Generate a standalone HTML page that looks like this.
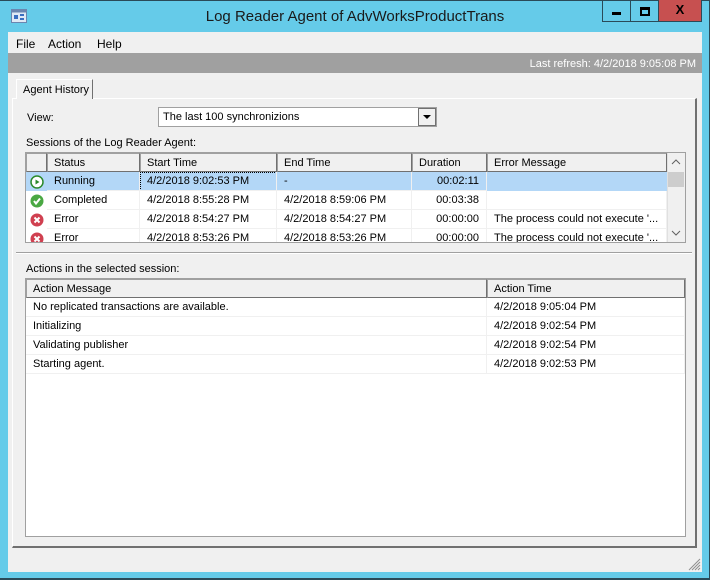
<!DOCTYPE html><html><head><style>
*{box-sizing:border-box;margin:0;padding:0}
body{width:710px;height:580px;position:relative;background:#65cbe9;font-family:"Liberation Sans",sans-serif;font-size:11px;color:#000;overflow:hidden}
.a{position:absolute}
.t{white-space:nowrap}
.hd{position:absolute;top:0;height:19px;background:#f0f0f0;border:1px solid #a0a0a0;border-right-color:#707070;border-bottom-color:#707070;padding:3px 0 0 6px}
.cell{position:absolute;height:19px;border-bottom:1px solid #f0f0f0;border-right:1px solid #f0f0f0;padding:3px 0 0 7px;white-space:nowrap}
</style></head><body>
<div class="a" style="left:0;top:0;width:710px;height:1px;background:#2a4a58"></div>
<div class="a" style="left:0;top:578px;width:710px;height:2px;background:#2a4a58"></div>
<div class="a" style="left:709px;top:0;width:1px;height:580px;background:#2a4a58"></div>
<svg class="a" style="left:11px;top:9px" width="16" height="14"><rect x="0.5" y="0.5" width="15" height="13" fill="#dfe9f5" stroke="#6a86b0"/><rect x="0.5" y="0.5" width="15" height="3" fill="#6a86b0"/><rect x="3" y="6" width="4" height="4" fill="#3a6fc0"/><rect x="9" y="5" width="4" height="2" fill="#3a6fc0"/><rect x="9" y="9" width="4" height="2" fill="#3a6fc0"/></svg>
<div class="a t" style="left:0;width:710px;top:8px;text-align:center;font-size:15px;color:#1a1a1a">Log Reader Agent of AdvWorksProductTrans</div>
<div class="a" style="left:602px;top:0;width:29px;height:22px;border:1px solid #2a4a58;border-top:0"></div>
<div class="a" style="left:612px;top:12px;width:9px;height:3px;background:#000"></div>
<div class="a" style="left:630px;top:0;width:29px;height:22px;border:1px solid #2a4a58;border-top:0"></div>
<div class="a" style="left:640px;top:7px;width:10px;height:9px;border:2px solid #000;border-top-width:3px"></div>
<div class="a" style="left:658px;top:0;width:44px;height:22px;background:#c75050;border:1px solid #2a4a58;border-top:0;text-align:center;font-weight:bold;font-size:13px;line-height:20px">X</div>
<div class="a" style="left:8px;top:32px;width:694px;height:540px;background:#f0f0f0"></div>
<div class="a t" style="left:16px;top:37px;font-size:12px">File</div>
<div class="a t" style="left:48px;top:37px;font-size:12px">Action</div>
<div class="a t" style="left:97px;top:37px;font-size:12px">Help</div>
<div class="a" style="left:8px;top:53px;width:694px;height:20px;background:#a0a0a0"></div>
<div class="a t" style="right:14px;top:58px;color:#fff">Last refresh: 4/2/2018 9:05:08 PM</div>
<div class="a" style="left:12px;top:98px;width:685px;height:450px;border:1px solid #fff;border-bottom:2px solid #707070;border-right:2px solid #707070"></div>
<div class="a t" style="left:16px;top:79px;width:77px;height:20px;border:1px solid #fff;border-right:1px solid #707070;border-bottom:0;background:#f0f0f0;padding:4px 0 0 6px">Agent History</div>
<div class="a t" style="left:27px;top:112px">View:</div>
<div class="a" style="left:158px;top:107px;width:279px;height:20px;background:#fff;border:1px solid #a0a0a0"></div>
<div class="a t" style="left:163px;top:111px">The last 100 synchronizions</div>
<div class="a" style="left:418px;top:108px;width:18px;height:18px;background:#f0f0f0;border:1px solid #707070"></div>
<div class="a" style="left:423px;top:115px;width:0;height:0;border-left:4px solid transparent;border-right:4px solid transparent;border-top:4px solid #000"></div>
<div class="a t" style="left:26px;top:137px">Sessions of the Log Reader Agent:</div>
<div class="a" style="left:25px;top:152px;width:661px;height:91px;background:#fff;border:1px solid #a0a0a0;overflow:hidden">
 <div class="hd" style="left:0;width:21px"></div>
 <div class="hd t" style="left:21px;width:93px">Status</div>
 <div class="hd t" style="left:114px;width:137px">Start Time</div>
 <div class="hd t" style="left:251px;width:135px">End Time</div>
 <div class="hd t" style="left:386px;width:75px">Duration</div>
 <div class="hd t" style="left:461px;width:180px">Error Message</div>
 <div class="a" style="left:0;top:19px;width:641px;height:19px;background:#b3d7f7"></div>
 <div class="a" style="left:114px;top:19px;width:137px;height:19px;border:1px dotted #000"></div>
 <svg class="a" style="left:4px;top:22px" width="14" height="14"><circle cx="7" cy="7" r="6" fill="#fff" stroke="#2c8a2c" stroke-width="1.5"/><path d="M5.5 4.5 L9.5 7 L5.5 9.5Z" fill="#2c8a2c"/></svg>
 <svg class="a" style="left:4px;top:41px" width="14" height="14"><circle cx="7" cy="7" r="6.5" fill="#4aa843"/><path d="M4 7 L6 9.5 L10 4.5" stroke="#fff" stroke-width="2" fill="none"/></svg>
 <svg class="a" style="left:4px;top:60px" width="14" height="14"><circle cx="7" cy="7" r="6.5" fill="#d04050"/><path d="M4.5 4.5 L9.5 9.5 M9.5 4.5 L4.5 9.5" stroke="#fff" stroke-width="2"/></svg>
 <svg class="a" style="left:4px;top:79px" width="14" height="14"><circle cx="7" cy="7" r="6.5" fill="#d04050"/><path d="M4.5 4.5 L9.5 9.5 M9.5 4.5 L4.5 9.5" stroke="#fff" stroke-width="2"/></svg>
 <div class="cell" style="left:21px;top:19px;width:93px">Running</div>
 <div class="cell" style="left:114px;top:19px;width:137px">4/2/2018 9:02:53 PM</div>
 <div class="cell" style="left:251px;top:19px;width:135px">-</div>
 <div class="cell" style="left:386px;top:19px;width:75px;text-align:right;padding-right:7px">00:02:11</div>
 <div class="cell" style="left:21px;top:38px;width:93px">Completed</div>
 <div class="cell" style="left:114px;top:38px;width:137px">4/2/2018 8:55:28 PM</div>
 <div class="cell" style="left:251px;top:38px;width:135px">4/2/2018 8:59:06 PM</div>
 <div class="cell" style="left:386px;top:38px;width:75px;text-align:right;padding-right:7px">00:03:38</div>
 <div class="cell" style="left:461px;top:38px;width:180px"></div>
 <div class="cell" style="left:21px;top:57px;width:93px">Error</div>
 <div class="cell" style="left:114px;top:57px;width:137px">4/2/2018 8:54:27 PM</div>
 <div class="cell" style="left:251px;top:57px;width:135px">4/2/2018 8:54:27 PM</div>
 <div class="cell" style="left:386px;top:57px;width:75px;text-align:right;padding-right:7px">00:00:00</div>
 <div class="cell" style="left:461px;top:57px;width:180px">The process could not execute '...</div>
 <div class="cell" style="left:21px;top:76px;width:93px">Error</div>
 <div class="cell" style="left:114px;top:76px;width:137px">4/2/2018 8:53:26 PM</div>
 <div class="cell" style="left:251px;top:76px;width:135px">4/2/2018 8:53:26 PM</div>
 <div class="cell" style="left:386px;top:76px;width:75px;text-align:right;padding-right:7px">00:00:00</div>
 <div class="cell" style="left:461px;top:76px;width:180px">The process could not execute '...</div>
 <div class="a" style="left:641px;top:0;width:18px;height:89px;background:#f0f0f0;border-left:1px solid #e0e0e0"></div>
 <div class="a" style="left:642px;top:19px;width:16px;height:15px;background:#cdcdcd"></div>
 <svg class="a" style="left:645px;top:5px" width="10" height="8"><path d="M1 6L5 2L9 6" stroke="#606060" fill="none"/></svg>
 <svg class="a" style="left:645px;top:76px" width="10" height="8"><path d="M1 2L5 6L9 2" stroke="#606060" fill="none"/></svg>
</div>
<div class="a" style="left:16px;top:252px;width:676px;height:2px;border-top:1px solid #a0a0a0;border-bottom:1px solid #fff"></div>
<div class="a t" style="left:26px;top:263px">Actions in the selected session:</div>
<div class="a" style="left:25px;top:278px;width:661px;height:259px;background:#fff;border:1px solid #a0a0a0;overflow:hidden">
 <div class="hd t" style="left:0;width:461px">Action Message</div>
 <div class="hd t" style="left:461px;width:198px">Action Time</div>
 <div class="cell" style="left:0;top:19px;width:461px">No replicated transactions are available.</div>
 <div class="cell" style="left:461px;top:19px;width:198px">4/2/2018 9:05:04 PM</div>
 <div class="cell" style="left:0;top:38px;width:461px">Initializing</div>
 <div class="cell" style="left:461px;top:38px;width:198px">4/2/2018 9:02:54 PM</div>
 <div class="cell" style="left:0;top:57px;width:461px">Validating publisher</div>
 <div class="cell" style="left:461px;top:57px;width:198px">4/2/2018 9:02:54 PM</div>
 <div class="cell" style="left:0;top:76px;width:461px">Starting agent.</div>
 <div class="cell" style="left:461px;top:76px;width:198px">4/2/2018 9:02:53 PM</div>
</div>
<svg class="a" style="left:688px;top:558px" width="13" height="13"><path d="M12 1L1 12M12 4L4 12M12 7L7 12M12 10L10 12" stroke="#909090" stroke-width="1"/></svg>
</body></html>
